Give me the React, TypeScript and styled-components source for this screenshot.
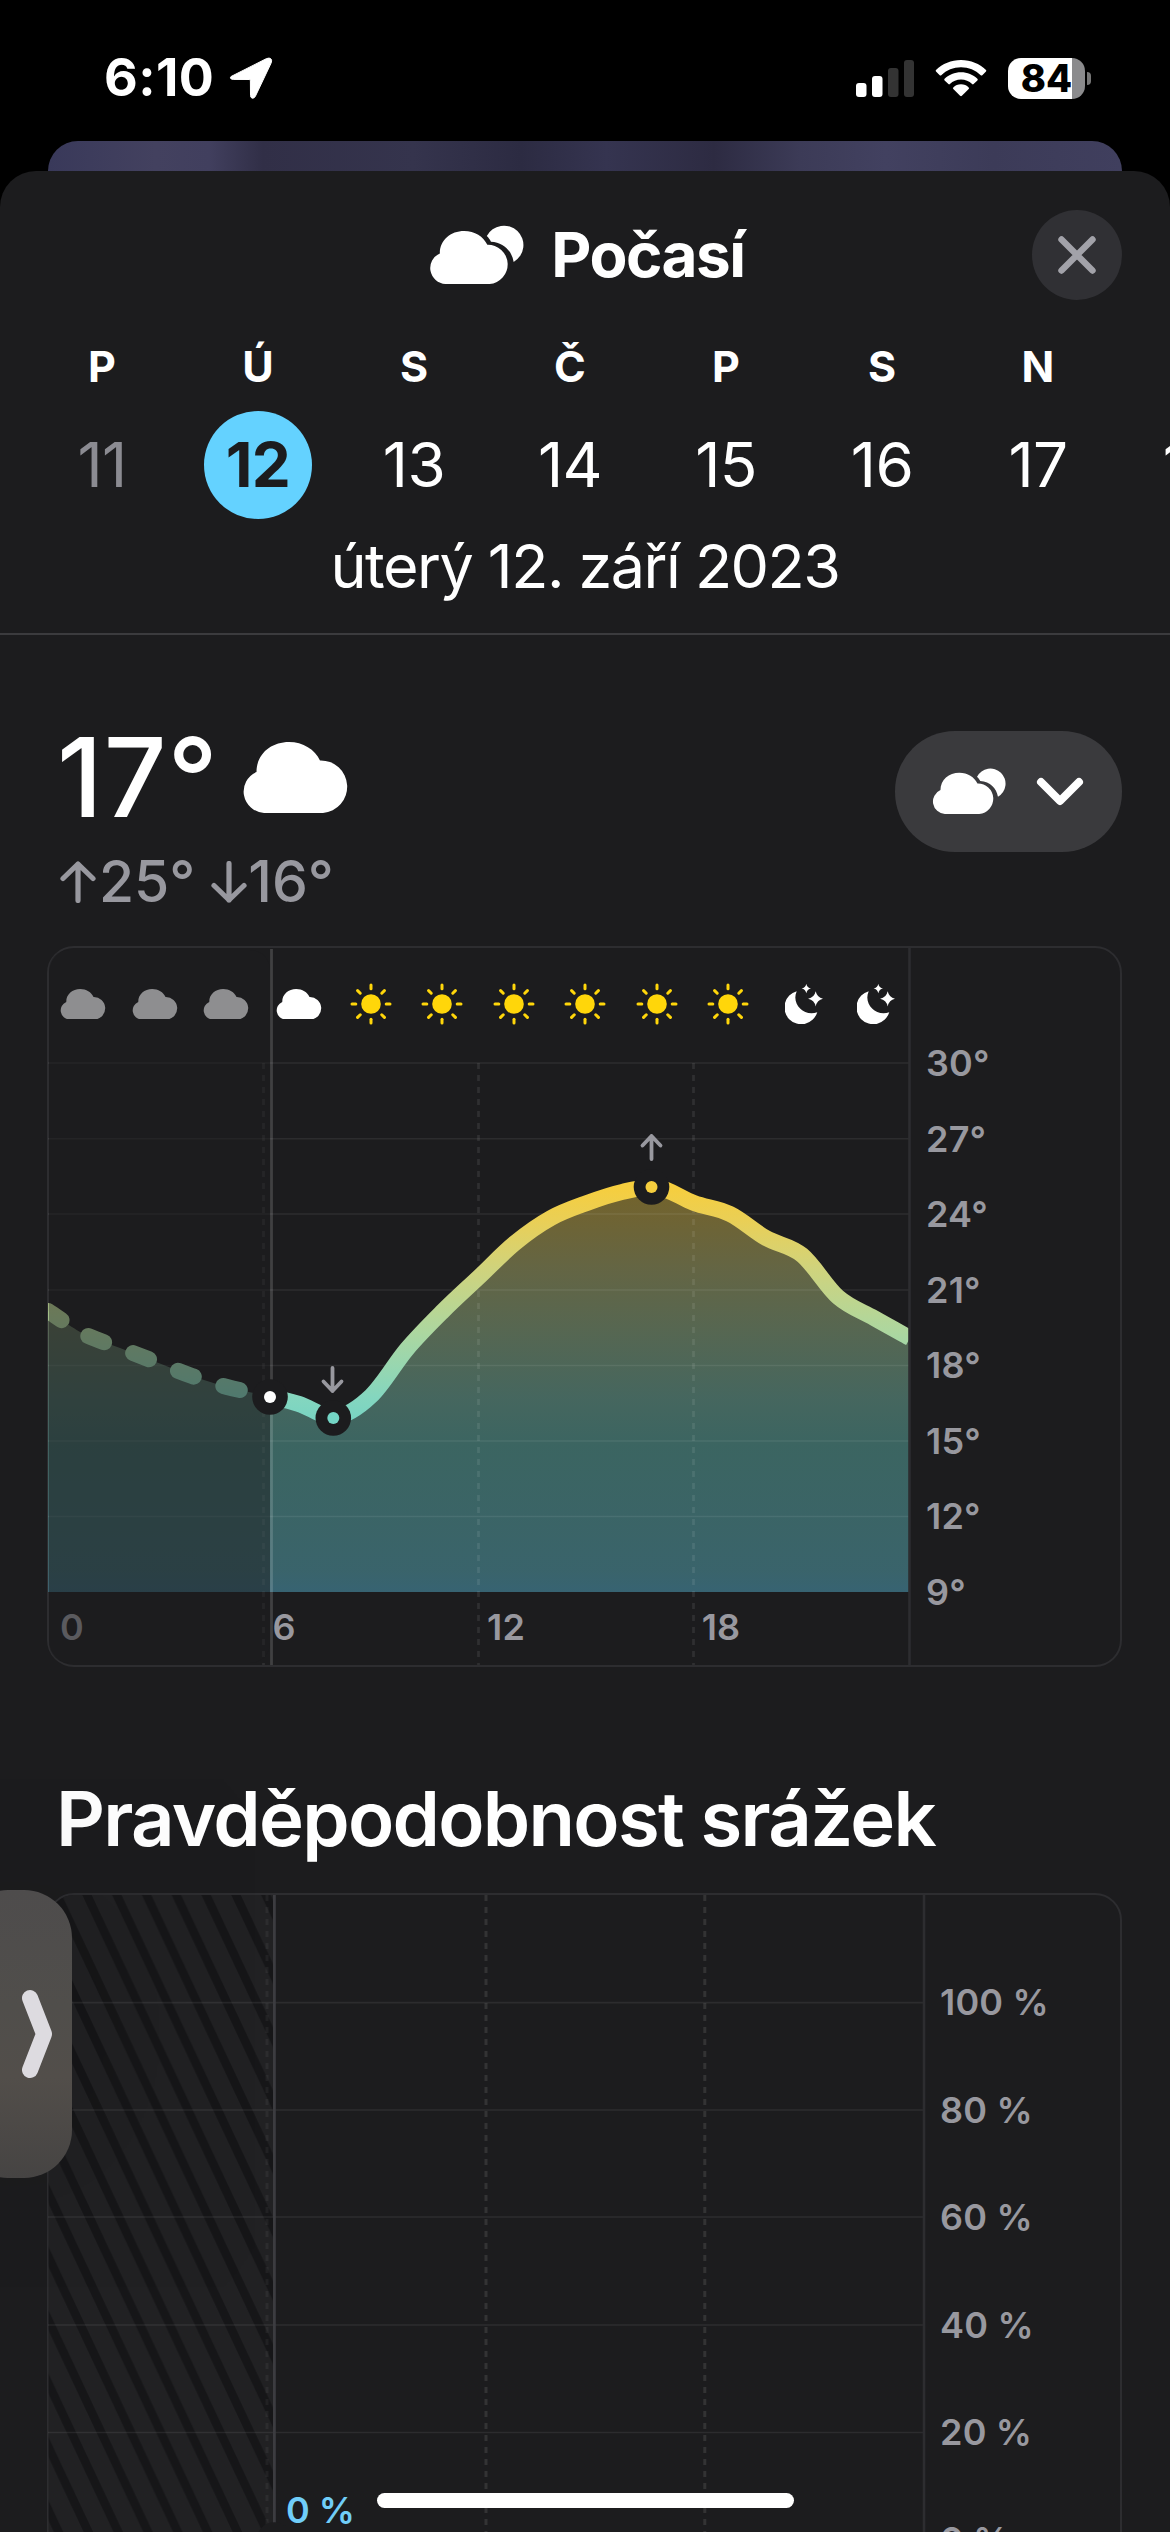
import React from "react";
import styled, { createGlobalStyle } from "styled-components";

const colors = {
  sheet: "#1c1c1e",
  line: "#2d2d30",
  now: "#3c3c40",
  grey: "#98989f",
  dim: "#5a5a5e",
  blue: "#64d2ff",
  sun: "#ffd60a",
};

const GlobalStyle = createGlobalStyle`
  *, *::before, *::after { box-sizing: border-box; }
  html, body { margin: 0; padding: 0; background: #000; }
  body { font-family: Inter, "Liberation Sans", sans-serif; color: #fff; }
  svg { display: block; flex: none; }
`;

const Screen = styled.div`
  position: relative;
  width: 1170px;
  height: 2532px;
  overflow: hidden;
  background: #000;
  display: flex;
  flex-direction: column;
`;

const StatusBar = styled.div`
  flex: none;
  height: 141px;
  padding: 54px 85px 39px 104px;
  display: flex;
  align-items: center;
  justify-content: space-between;
`;

const StatusGroup = styled.div<{ $gap: number }>`
  display: flex;
  align-items: center;
  gap: ${(p) => p.$gap}px;
`;

const Clock = styled.span`
  font-size: 52px;
  line-height: 48px;
  font-weight: 700;
  letter-spacing: 0.4px;
`;

const Battery = styled.div`
  position: relative;
  width: 77px;
  height: 41px;
  border-radius: 13px;
  background: linear-gradient(90deg, #fff 0 64px, #8b8b8d 64px);
  color: #000;
  font-size: 38px;
  font-weight: 800;
  line-height: 41px;
  text-align: center;
  &::after {
    content: "";
    position: absolute;
    right: -6px;
    top: 14px;
    width: 4px;
    height: 13px;
    border-radius: 0 4px 4px 0;
    background: #777;
  }
`;

const BackCard = styled.div`
  flex: none;
  height: 30px;
  margin: 0 48px;
  border-radius: 30px 30px 0 0;
  background: linear-gradient(
    90deg,
    #39395a 0%,
    #43415f 10%,
    #413f5e 15%,
    #312f47 20%,
    #35344d 34%,
    #2c2b42 44%,
    #353450 52%,
    #2d2b42 62%,
    #3c3b57 70%,
    #424160 78%,
    #3c3b58 88%,
    #403f5e 100%
  );
`;

const Sheet = styled.main`
  flex: 1;
  min-height: 0;
  border-radius: 36px 36px 0 0;
  background: ${colors.sheet};
`;

const SheetHeader = styled.header`
  padding: 39px 0 37px;
  border-bottom: 2px solid #3b3b3e;
`;

const TitleRow = styled.div`
  display: grid;
  grid-template-columns: 90px 1fr 90px;
  align-items: center;
  height: 90px;
  padding: 0 48px;
`;

const Title = styled.h1`
  margin: 0 0 0 4px;
  grid-column: 2;
  display: flex;
  align-items: center;
  justify-content: center;
  gap: 27px;
  font-size: 62px;
  line-height: 62px;
  font-weight: 700;
  letter-spacing: -1.5px;
`;

const CloseButton = styled.button`
  width: 90px;
  height: 90px;
  border: 0;
  border-radius: 50%;
  background: #303034;
  padding: 0;
  display: grid;
  place-items: center;
`;

const Days = styled.div`
  display: grid;
  grid-template-columns: repeat(8, 156px);
  width: 1170px;
  padding: 44px 0 0 24px;
  overflow: hidden;
`;

const Day = styled.div`
  display: flex;
  flex-direction: column;
  align-items: center;
  gap: 22px;
`;

const Weekday = styled.span`
  height: 45px;
  font-size: 43px;
  line-height: 45px;
  font-weight: 700;
`;

const DayNumber = styled.span<{ $state?: "past" | "selected" }>`
  width: 108px;
  height: 108px;
  border-radius: 50%;
  display: grid;
  place-items: center;
  font-size: 62px;
  line-height: 108px;
  letter-spacing: -0.6px;
  font-weight: ${(p) => (p.$state === "selected" ? 700 : 400)};
  color: ${(p) => (p.$state === "past" ? "#8b8b92" : p.$state === "selected" ? colors.sheet : "#fff")};
  background: ${(p) => (p.$state === "selected" ? colors.blue : "transparent")};
`;

const FullDate = styled.p`
  margin: 17px 0 0;
  text-align: center;
  font-size: 61px;
  line-height: 60px;
  letter-spacing: -1.5px;
`;

const Summary = styled.section`
  display: flex;
  justify-content: space-between;
  align-items: flex-start;
  padding: 87px 48px 36px 57px;
`;

const Current = styled.div`
  display: flex;
  align-items: center;
  gap: 23px;
  height: 110px;
  font-size: 110px;
  line-height: 110px;
  font-weight: 500;
  letter-spacing: 1px;
`;

const HighLow = styled.div`
  display: flex;
  align-items: center;
  margin: 21px 0 0 3px;
  height: 57px;
  font-size: 57px;
  line-height: 57px;
  font-weight: 500;
  letter-spacing: 0;
  color: ${colors.grey};
  gap: 3px;
`;

const Low = styled.span`
  display: flex;
  align-items: center;
  gap: 1px;
  margin-left: 13px;
`;

const Picker = styled.button`
  margin: 9px 0 0;
  width: 227px;
  height: 121px;
  border: 0;
  border-radius: 60px;
  background: #3a3a3d;
  padding: 0 38px 0 37px;
  display: flex;
  align-items: center;
  justify-content: space-between;
`;

const Frame = styled.section<{ $height: number }>`
  position: relative;
  display: flex;
  width: 1075px;
  height: ${(p) => p.$height}px;
  margin-left: 47px;
  border: 2px solid ${colors.line};
  border-radius: 27px;
`;

const Drawing = styled.svg`
  position: absolute;
  left: -2px;
  top: -2px;
`;

const Plot = styled.div<{ $width: number }>`
  position: relative;
  width: ${(p) => p.$width}px;
  display: flex;
  flex-direction: column;
  justify-content: space-between;
`;

const IconRow = styled.div`
  display: flex;
  padding: 26px 0 0 0;
`;

const cellPadding: Record<string, string> = {
  past: "0 3px 0 0",
  cloud: "0",
  sun: "0",
  moon: "0 0 0 9px",
};

const IconCell = styled.span<{ $kind: string }>`
  width: 71.5px;
  height: 60px;
  padding: ${(p) => cellPadding[p.$kind]};
  display: flex;
  align-items: center;
  justify-content: center;
`;

const HourRow = styled.div`
  display: grid;
  grid-template-columns: 212.5px 214.6px 214.6px 214.6px;
  height: 74px;
`;

const Hour = styled.span<{ $dim?: boolean }>`
  padding-left: 11px;
  font-size: 36px;
  line-height: 73px;
  font-weight: 600;
  letter-spacing: 0.2px;
  color: ${(p) => (p.$dim ? colors.dim : colors.grey)};
`;

const Axis = styled.div<{ $top: number; $step: number }>`
  position: relative;
  padding: ${(p) => p.$top}px 0 0 16px;
  display: flex;
  flex-direction: column;
  font-size: 36px;
  line-height: ${(p) => p.$step}px;
  font-weight: 600;
  letter-spacing: 0.2px;
  color: ${colors.grey};
`;

const SectionTitle = styled.h2`
  margin: 111px 0 35px 56px;
  font-size: 76px;
  line-height: 80px;
  font-weight: 600;
  letter-spacing: -1.7px;
  white-space: nowrap;
`;

const NowValue = styled.span`
  position: absolute;
  left: 237px;
  top: 591px;
  font-size: 36px;
  line-height: 48px;
  font-weight: 600;
  color: #70cdf8;
`;

const SideTab = styled.div`
  position: absolute;
  left: -40px;
  top: 1890px;
  width: 112px;
  height: 288px;
  border-radius: 48px;
  background: linear-gradient(180deg, #4e4c4c 0%, #504e4b 40%, #524e4a 65%, #464443 100%);
  box-shadow: 0 0 240px rgba(0, 0, 0, 0.22);
  display: flex;
  align-items: center;
  justify-content: flex-end;
  padding-right: 17px;
`;

const HomeIndicator = styled.div`
  position: absolute;
  left: 377px;
  top: 2493px;
  width: 417px;
  height: 15px;
  border-radius: 8px;
  background: #fff;
`;

const CLOUD =
  "M22 71A22 21.5 0 0 1 14.5 30C14.5 12 29 0 47 0C61 0 73 7.5 78 18.5A26.3 26.3 0 0 1 81 71Z";

const Cloud = ({ width, fill = "#fff" }: { width: number; fill?: string }) => (
  <svg width={width} height={(width * 71) / 107} viewBox="0 0 107 71">
    <path d={CLOUD} fill={fill} />
  </svg>
);

const Clouds = ({ width }: { width: number }) => (
  <svg width={width} height={(width * 60) / 94} viewBox="0 -0.5 94 60">
    <path d={CLOUD} fill="#fff" transform="translate(0 5.4) scale(.74)" />
    <path
      d="M57.2 10.5A19.2 19.2 0 1 1 83.8 36C82 25.5 74 16.5 61.3 16C60.2 14 59 12.3 57.2 10.5Z"
      fill="#fff"
    />
  </svg>
);

const Sun = () => (
  <svg width="42" height="42" viewBox="-21 -21 42 42">
    <circle r="9.8" fill={colors.sun} />
    {[0, 45, 90, 135, 180, 225, 270, 315].map((a) => (
      <line
        key={a}
        y1={-19}
        y2={-15.2}
        stroke={colors.sun}
        strokeWidth="3"
        strokeLinecap="round"
        transform={`rotate(${a})`}
      />
    ))}
  </svg>
);

const star = (cx: number, cy: number, r: number) => {
  const k = r * 0.18;
  return `M${cx} ${cy - r}Q${cx + k} ${cy - k} ${cx + r} ${cy}Q${cx + k} ${cy + k} ${cx} ${cy + r}Q${cx - k} ${cy + k} ${cx - r} ${cy}Q${cx - k} ${cy - k} ${cx} ${cy - r}Z`;
};

const Moon = () => (
  <svg width="38" height="40" viewBox="0 0 38 40">
    <path d="M11.7 7.2A16.8 16.8 0 1 0 32.3 28.2C19 33 6 20 11.7 7.2Z" fill="#fff" />
    <path d={star(30.7, 14.8, 7.6)} fill="#fff" />
    <path d={star(21.3, 4.6, 4.7)} fill="#fff" />
  </svg>
);

const Arrow = ({ down }: { down?: boolean }) => (
  <svg width="36" height="42" viewBox="0 0 36 42">
    <path
      d={down ? "M18 2.5V39M3 24.500L18 39L33 24.500" : "M18 39.5V3M3 17.5L18 3L33 17.5"}
      fill="none"
      stroke={colors.grey}
      strokeWidth="5.2"
      strokeLinecap="round"
      strokeLinejoin="round"
    />
  </svg>
);

type Point = [number, number];

const hourly: Point[] = [
  [48, 1311], [84, 1334], [120, 1348], [156, 1362], [192, 1376], [227, 1387], [263, 1395],
  [299, 1404], [335, 1417], [371, 1396], [407, 1349], [443, 1311], [479, 1277],
  [515, 1243], [551, 1218], [587, 1203], [622, 1192], [658, 1187.5], [694, 1203],
  [730, 1214], [766, 1238], [802, 1255], [838, 1297], [874, 1318], [910, 1338],
];

const smooth = (pts: Point[]) => {
  let d = `M${pts[0][0]} ${pts[0][1]}`;
  for (let i = 0; i < pts.length - 1; i++) {
    const a = pts[Math.max(0, i - 1)];
    const b = pts[i];
    const c = pts[i + 1];
    const e = pts[Math.min(pts.length - 1, i + 2)];
    d += `C${b[0] + (c[0] - a[0]) / 6} ${b[1] + (c[1] - a[1]) / 6} ${c[0] - (e[0] - b[0]) / 6} ${c[1] - (e[1] - b[1]) / 6} ${c[0]} ${c[1]}`;
  }
  return d;
};

const curve = smooth(hourly);

const Marker = ({ x, y, fill }: { x: number; y: number; fill: string }) => (
  <g>
    <circle cx={x} cy={y} r="17.8" fill={colors.sheet} />
    <circle cx={x} cy={y} r="6" fill={fill} />
  </g>
);

const GridLines = ({ right, ys }: { right: number; ys: number[] }) => (
  <g stroke="#fff" strokeOpacity="0.075" strokeWidth="1.6">
    {ys.map((y) => (
      <line key={y} x1="48" x2={right} y1={y} y2={y} />
    ))}
  </g>
);

const TemperatureDrawing = () => (
  <Drawing width="1075" height="721" viewBox="47 946 1075 721">
    <defs>
      <linearGradient id="temp" gradientUnits="userSpaceOnUse" x1="0" x2="0" y1="1187" y2="1592">
        <stop offset="0" stopColor="#f6ce3e" />
        <stop offset="0.08" stopColor="#eacf55" />
        <stop offset="0.2" stopColor="#d0d37c" />
        <stop offset="0.36" stopColor="#acd7a0" />
        <stop offset="0.52" stopColor="#84d6bf" />
        <stop offset="0.64" stopColor="#6ad2c6" />
        <stop offset="0.86" stopColor="#68d0d6" />
        <stop offset="0.95" stopColor="#66cfdf" />
        <stop offset="1" stopColor="#60cef0" />
      </linearGradient>
      <clipPath id="plotArea">
        <rect x="48.2" y="948" width="861.3" height="644" />
      </clipPath>
      <clipPath id="past">
        <rect x="48.2" y="948" width="222.8" height="644" />
      </clipPath>
      <clipPath id="future">
        <rect x="271" y="948" width="638.5" height="644" />
      </clipPath>
    </defs>
    <path d={`${curve}V1592H48Z`} fill="url(#temp)" fillOpacity="0.4" clipPath="url(#plotArea)" />
    <GridLines right={909} ys={[1063, 1138.7, 1214, 1290, 1365.5, 1441, 1516.5]} />
    <g stroke="#fff" strokeOpacity="0.085" strokeWidth="2.8" strokeDasharray="6 6">
      <line x1="263.5" x2="263.5" y1="1063" y2="1665" />
      <line x1="478.5" x2="478.5" y1="1063" y2="1665" />
      <line x1="693.5" x2="693.5" y1="1063" y2="1665" />
    </g>
    <g fill="none" stroke="url(#temp)" strokeWidth="16">
      <g clipPath="url(#past)">
        <path d={curve} strokeLinecap="round" strokeDasharray="17 31" strokeDashoffset="0.5" />
      </g>
      <path d={curve} clipPath="url(#future)" />
    </g>
    <rect x="49" y="950" width="221" height="713" rx="20" fill={colors.sheet} fillOpacity="0.5" />
    <line x1="909.5" x2="909.5" y1="948" y2="1665" stroke={colors.line} strokeWidth="2.6" />
    <line x1="271.5" x2="271.5" y1="949" y2="1665" stroke="#fff" strokeOpacity="0.16" strokeWidth="2.8" />
    <Marker x={270} y={1397} fill="#fff" />
    <Marker x={333.3} y={1418} fill="#74d6c6" />
    <Marker x={651.5} y={1187} fill="#f6ce3e" />
    <g fill="none" stroke={colors.grey} strokeWidth="3.8" strokeLinecap="round" strokeLinejoin="round">
      <path d="M332.5 1368V1391M323.5 1381.5L332.5 1391L341.5 1381.5" />
      <path d="M651.5 1159V1136M642.5 1145.5L651.5 1136L660.5 1145.5" />
    </g>
  </Drawing>
);

const PrecipitationDrawing = () => (
  <Drawing width="1075" height="660" viewBox="47 1893 1075 660">
    <defs>
      <pattern
        id="hatch"
        patternUnits="userSpaceOnUse"
        width="29.8"
        height="63.4"
        patternTransform="translate(87 1895)"
      >
        <rect width="29.8" height="63.4" fill="#212123" />
        <path
          d="M-29.8 -63.4L59.6 126.8M0 -63.4L59.6 63.4M-59.6 -63.4L29.8 126.8"
          stroke="#161618"
          strokeWidth="8.6"
        />
      </pattern>
      <clipPath id="pastPrecipitation">
        <path d="M48.5 2553V1921A26 26 0 0 1 74.5 1895H273V2553Z" />
      </clipPath>
    </defs>
    <rect x="48" y="1895" width="226" height="658" fill="url(#hatch)" clipPath="url(#pastPrecipitation)" />
    <GridLines right={924} ys={[2002.6, 2110, 2217, 2325, 2432.5]} />
    <g stroke="#fff" strokeOpacity="0.1" strokeWidth="3" strokeDasharray="6 6">
      <line x1="267" x2="267" y1="1895" y2="2550" strokeOpacity="0.05" />
      <line x1="486" x2="486" y1="1895" y2="2550" />
      <line x1="704.8" x2="704.8" y1="1895" y2="2550" />
    </g>
    <line x1="924" x2="924" y1="1895" y2="2550" stroke={colors.line} strokeWidth="2.6" />
    <line x1="274.4" x2="274.4" y1="1895" y2="2550" stroke={colors.now} strokeWidth="2.8" />
    <Marker x={274.4} y={2540} fill={colors.blue} />
  </Drawing>
);

const days: { letter: string; day: number; state?: "past" | "selected" }[] = [
  { letter: "P", day: 11, state: "past" },
  { letter: "Ú", day: 12, state: "selected" },
  { letter: "S", day: 13 },
  { letter: "Č", day: 14 },
  { letter: "P", day: 15 },
  { letter: "S", day: 16 },
  { letter: "N", day: 17 },
  { letter: "", day: 18 },
];

const conditions = ["past", "past", "past", "cloud", "sun", "sun", "sun", "sun", "sun", "sun", "moon", "moon"];

const ConditionIcon = ({ kind }: { kind: string }) => {
  if (kind === "sun") return <Sun />;
  if (kind === "moon") return <Moon />;
  return <Cloud width={46} fill={kind === "past" ? "#8e8e90" : "#fff"} />;
};

const Signal = () => (
  <svg width="58" height="38" viewBox="0 0 58 38">
    <rect x="0" y="24" width="10.5" height="14" rx="3" fill="#fff" />
    <rect x="16" y="17" width="10.5" height="21" rx="3" fill="#fff" />
    <rect x="32" y="9" width="10.5" height="29" rx="3" fill="#333" />
    <rect x="48" y="1" width="10" height="37" rx="3" fill="#333" />
  </svg>
);

const Wifi = () => (
  <svg width="52" height="38" viewBox="0 0 52 38">
    <g fill="#fff">
      <path d="M26 1C35.800 1 44.600 4.800 51 11Q51.700 11.800 51 12.600L47.300 16.200Q46.500 17 45.700 16.200C40.500 11.200 33.600 8.300 26 8.300S11.500 11.200 6.300 16.200Q5.500 17 4.700 16.200L1 12.600Q.3 11.800 1 11C7.400 4.800 16.200 1 26 1Z" />
      <path d="M26 13.300C32.400 13.300 38.100 15.800 42.400 19.800Q43.200 20.600 42.400 21.400L38.600 25.100Q37.900 25.800 37.100 25.100C34.100 22.300 30.300 20.600 26 20.600S17.900 22.300 14.900 25.100Q14.100 25.800 13.400 25.100L9.600 21.400Q8.800 20.600 9.600 19.800C13.900 15.800 19.600 13.300 26 13.300Z" />
      <path d="M26 25.300C29 25.300 31.700 26.500 33.700 28.400Q34.500 29.200 33.700 30L26.900 36.800Q26 37.600 25.100 36.800L18.300 30Q17.500 29.200 18.300 28.400C20.300 26.500 23 25.300 26 25.300Z" />
    </g>
  </svg>
);

export default function App() {
  return (
    <>
      <GlobalStyle />
      <Screen>
        <StatusBar>
          <StatusGroup $gap={15}>
            <Clock>6:10</Clock>
            <svg width="44" height="42" viewBox="0 0 44 42">
              <path
                d="M4 18.500L37.500 1.600Q40.500 .3 42 2Q43.300 3.400 42 6.300L26.500 39Q25.300 41.600 23.200 41.200Q21.500 40.800 21.500 38.300L21.400 23.700Q21.400 22.500 20.200 22.500L4.400 22.400Q1.800 22.400 1.400 20.900Q1.200 19.500 4 18.500Z"
                fill="#fff"
                stroke="#fff"
                strokeWidth="1"
              />
            </svg>
          </StatusGroup>
          <StatusGroup $gap={21}>
            <Signal />
            <Wifi />
            <Battery>84</Battery>
          </StatusGroup>
        </StatusBar>
        <BackCard />
        <Sheet>
          <SheetHeader>
            <TitleRow>
              <Title>
                <Clouds width={95} />
                Počasí
              </Title>
              <CloseButton aria-label="Zavřít">
                <svg width="38" height="38" viewBox="0 0 38 38">
                  <path d="M3.500 3.500L34.500 34.500M34.500 3.500L3.500 34.500" stroke="#a2a2a9" strokeWidth="6.4" strokeLinecap="round" />
                </svg>
              </CloseButton>
            </TitleRow>
            <Days>
              {days.map((d) => (
                <Day key={d.day}>
                  <Weekday>{d.letter}</Weekday>
                  <DayNumber $state={d.state}>{d.day}</DayNumber>
                </Day>
              ))}
            </Days>
            <FullDate>úterý 12. září 2023</FullDate>
          </SheetHeader>
          <Summary>
            <div>
              <Current>
                17°
                <Cloud width={107} />
              </Current>
              <HighLow>
                <Arrow />
                25°
                <Low>
                  <Arrow down />
                  16°
                </Low>
              </HighLow>
            </div>
            <Picker aria-label="Podmínky">
              <Clouds width={74} />
              <svg width="48" height="30" viewBox="0 0 48 30">
                <path d="M5 5L24 24L43 5" fill="none" stroke="#fff" strokeWidth="8" strokeLinecap="round" strokeLinejoin="round" />
              </svg>
            </Picker>
          </Summary>
          <Frame $height={721}>
            <TemperatureDrawing />
            <Plot $width={861}>
              <IconRow>
                {conditions.map((kind, i) => (
                  <IconCell key={i} $kind={kind}>
                    <ConditionIcon kind={kind} />
                  </IconCell>
                ))}
              </IconRow>
              <HourRow>
                <Hour $dim>0</Hour>
                <Hour>6</Hour>
                <Hour>12</Hour>
                <Hour>18</Hour>
              </HourRow>
            </Plot>
            <Axis $top={78} $step={75.5}>
              {[30, 27, 24, 21, 18, 15, 12, 9].map((t) => (
                <span key={t}>{t}°</span>
              ))}
            </Axis>
          </Frame>
          <SectionTitle>Pravděpodobnost srážek</SectionTitle>
          <Frame $height={780}>
            <PrecipitationDrawing />
            <Plot $width={875}>
              <NowValue>0 %</NowValue>
            </Plot>
            <Axis $top={54} $step={107.5}>
              {[100, 80, 60, 40, 20, 0].map((t) => (
                <span key={t}>{t} %</span>
              ))}
            </Axis>
          </Frame>
        </Sheet>
        <SideTab>
          <svg width="36" height="92" viewBox="0 0 36 92">
            <path d="M11 10L25 46L11 82" fill="none" stroke="#dddbe0" strokeWidth="16" strokeLinecap="round" strokeLinejoin="round" />
          </svg>
        </SideTab>
        <HomeIndicator />
      </Screen>
    </>
  );
}
